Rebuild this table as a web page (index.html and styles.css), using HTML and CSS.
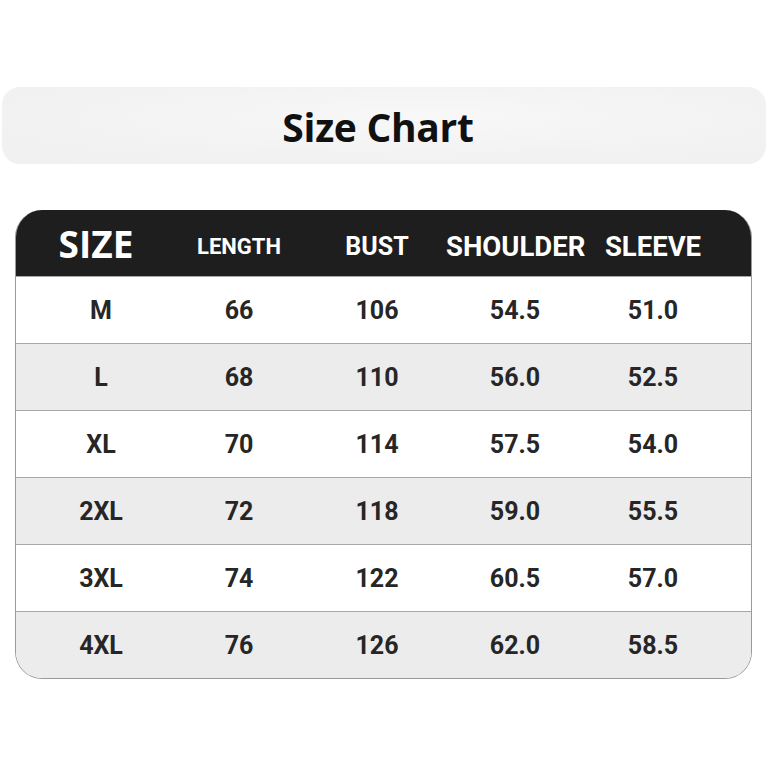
FILE: index.html
```html
<!DOCTYPE html>
<html lang="en">
<head>
<meta charset="utf-8">
<title>Size Chart</title>
<link rel="stylesheet" href="styles.css">
</head>
<body>
<div class="page">
  <div class="title-bar"><h1 class="title">Size Chart</h1></div>
  <div class="chart">
    <div class="row head">
      <div class="cell size-label">SIZE</div>
      <div class="cell small">LENGTH</div>
      <div class="cell mid">BUST</div>
      <div class="cell">SHOULDER</div>
      <div class="cell">SLEEVE</div>
    </div>
    <div class="row"><div class="cell">M</div><div class="cell">66</div><div class="cell">106</div><div class="cell">54.5</div><div class="cell">51.0</div></div>
    <div class="row alt"><div class="cell">L</div><div class="cell">68</div><div class="cell">110</div><div class="cell">56.0</div><div class="cell">52.5</div></div>
    <div class="row"><div class="cell">XL</div><div class="cell">70</div><div class="cell">114</div><div class="cell">57.5</div><div class="cell">54.0</div></div>
    <div class="row alt"><div class="cell">2XL</div><div class="cell">72</div><div class="cell">118</div><div class="cell">59.0</div><div class="cell">55.5</div></div>
    <div class="row"><div class="cell">3XL</div><div class="cell">74</div><div class="cell">122</div><div class="cell">60.5</div><div class="cell">57.0</div></div>
    <div class="row alt last"><div class="cell">4XL</div><div class="cell">76</div><div class="cell">126</div><div class="cell">62.0</div><div class="cell">58.5</div></div>
  </div>
</div>
</body>
</html>
```
FILE: styles.css
```css
html, body {
  margin: 0;
  padding: 0;
  background: #ffffff;
}
.page {
  width: 768px;
  height: 768px;
  padding-top: 87px;
  box-sizing: border-box;
}
.title-bar {
  margin: 0 2px;
  height: 77px;
  border-radius: 18px;
  background: radial-gradient(ellipse at 55% 40%, #f8f8f9 0%, #f2f2f2 60%, #f0f0f0 100%);
  display: flex;
  align-items: center;
  justify-content: center;
}
.title {
  margin: 0;
  font-family: "Open Sans", "Noto Sans", sans-serif;
  font-weight: 700;
  font-size: 39px;
  color: #111;
  letter-spacing: -0.3px;
  padding-right: 12px;
  padding-top: 2px;
}
.chart {
  margin: 46px 0 0 15px;
  width: 737px;
  box-sizing: border-box;
  border: 1px solid #9a9a9a;
  border-top: none;
  border-radius: 27px;
  overflow: hidden;
}
.row {
  display: grid;
  grid-template-columns: repeat(5, 138px);
  padding-left: 16px;
  height: 66px;
  align-items: center;
  border-top: 1px solid #a8a8a8;
  background: #ffffff;
  font-family: "Roboto", "DejaVu Sans", sans-serif;
  font-weight: 700;
  font-size: 25px;
  color: #262626;
}
.row.alt {
  background: #ececec;
}
.row.head {
  height: 66px;
  border-top: none;
  background: #1e1e1e;
  color: #ffffff;
  font-size: 27.5px;
}
.head .cell {
  padding-top: 6px;
}
.cell {
  text-align: center;
  white-space: nowrap;
}
.head .small {
  font-size: 22px;
}
.head .mid {
  font-size: 25px;
}
.head .size-label {
  font-family: "Open Sans", "Noto Sans", sans-serif;
  font-size: 37px;
  font-weight: 700;
  margin-right: 10px;
  padding-top: 0;
}
```
